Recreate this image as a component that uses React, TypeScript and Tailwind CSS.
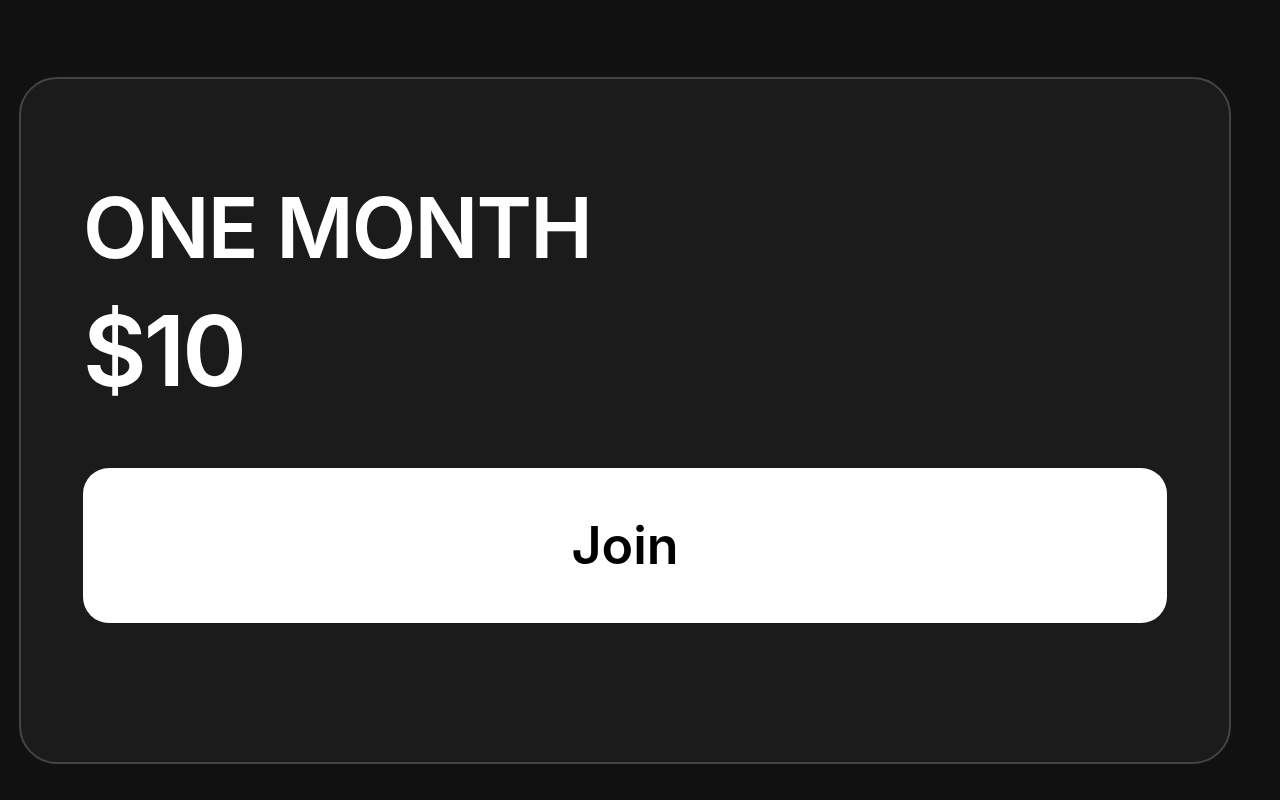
export default function App() {
  return (
    <div
      className="w-[1280px] h-[800px] bg-[#111111] pt-[77px] pl-[19px] overflow-hidden"
      style={{ fontFamily: 'Inter, "Liberation Sans", sans-serif' }}
    >
      <div className="w-[1212px] h-[687px] rounded-[38px] border-2 border-[#444444] bg-[#1b1b1b] px-[62px] pt-[107px] flex flex-col">
        <div className="text-[84px] leading-none font-semibold text-white tracking-[-1.8px]">ONE MONTH</div>
        <div className="mt-[32px] text-[98px] leading-none font-semibold text-white tracking-[-3px]">$10</div>
        <button className="mt-[68px] h-[155px] w-full rounded-[26px] bg-white text-black text-[52px] font-semibold flex items-center justify-center">
          Join
        </button>
      </div>
    </div>
  );
}
